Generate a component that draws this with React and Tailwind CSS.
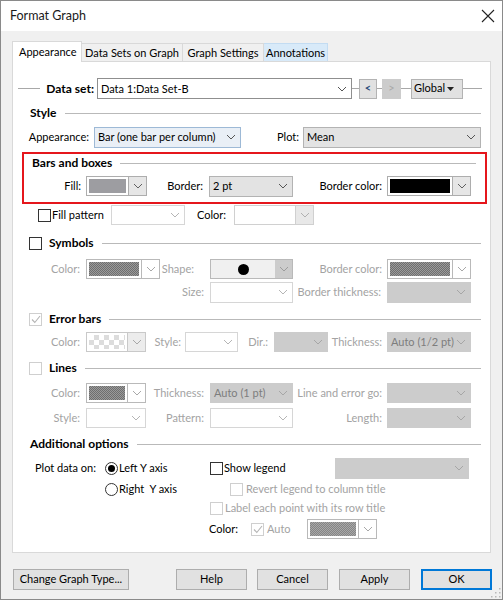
import React from "react";

const FONT = { fontFamily: 'Lato, "Liberation Sans", sans-serif' };

function Chevron({ color = "#606060" }) {
  return (
    <svg width="10" height="6" viewBox="0 0 10 6" className="shrink-0">
      <path d="M1 1 L5 5 L9 1" fill="none" stroke={color} strokeWidth="1" />
    </svg>
  );
}

// Plain dropdown: text on the left, chevron on the right
function Combo({ w, h = 20, text = "", variant = "white", className = "" }) {
  const styles = {
    white: "bg-white border-[#8f8f8f] text-black",
    blue: "bg-[#e9eff6] border-[#9db9d6] text-black",
    gray: "bg-[#e3e3e3] border-[#b3b3b3] text-black",
    off: "bg-white border-[#d6d6d6] text-[#9a9a9a]",
    offGray: "bg-[#cccccc] border-[#cccccc] text-[#7d7d7d]",
  };
  const chev = {
    white: "#555",
    blue: "#555",
    gray: "#555",
    off: "#b5b5b5",
    offGray: "#a6a6a6",
  };
  return (
    <div
      className={`flex items-center shrink-0 border pl-[3px] pr-[4px] ${styles[variant]} ${className}`}
      style={{ width: w, height: h }}
    >
      <span className="flex-1 min-w-0 whitespace-nowrap leading-[16px] text-[11px]">{text}</span>
      <Chevron color={chev[variant]} />
    </div>
  );
}

// Colour picker dropdown: a swatch and a separate arrow button
function Swatch({ w, h = 20, fill, btn = "bg-[#e6e6e6]", border = "border-[#adadad]", chev = "#606060" }) {
  return (
    <div className={`flex shrink-0 border ${border} bg-white`} style={{ width: w, height: h }}>
      <div className="flex-1 p-[2px]">
        <div className="w-full h-full" style={fill ? { background: fill } : undefined} />
      </div>
      <div className={`w-[18px] flex items-center justify-center border-l ${border} ${btn}`}>
        <Chevron color={chev} />
      </div>
    </div>
  );
}

function Lbl({ w, children, off = false, bold = false, align = "right", className = "" }) {
  return (
    <div
      className={`shrink-0 whitespace-pre ${align === "right" ? "text-right" : "text-left"} ${
        off ? "text-[#a3a3a3]" : "text-black"
      } ${bold ? "font-bold" : ""} ${className}`}
      style={{ width: w }}
    >
      {children}
    </div>
  );
}

function Check({ checked = false, off = false, className = "" }) {
  return (
    <div
      className={`w-[13px] h-[13px] shrink-0 border bg-white flex items-center justify-center ${
        off ? "border-[#cfcfcf]" : "border-[#333333]"
      } ${className}`}
    >
      {checked && (
        <svg width="10" height="9" viewBox="0 0 10 9">
          <path d="M1 4.5 L3.8 7.5 L9 1" fill="none" stroke={off ? "#b4b4b4" : "#222"} strokeWidth="1.1" />
        </svg>
      )}
    </div>
  );
}

function Radio({ on = false }) {
  return (
    <div className="w-[13px] h-[13px] shrink-0 rounded-full border border-[#333333] bg-white flex items-center justify-center">
      {on && <div className="w-[7px] h-[7px] rounded-full bg-black" />}
    </div>
  );
}

function Header({ children, check, checked, off, gap = 8 }) {
  return (
    <div className="flex items-center h-[16px] mr-[9px]">
      {check ? (
        <>
          <Check className="ml-[16px]" checked={checked} off={off} />
          <span className="ml-[7px] font-bold whitespace-nowrap text-[12px]">{children}</span>
        </>
      ) : (
        <span className="ml-[17px] font-bold whitespace-nowrap text-[12px]">{children}</span>
      )}
      <div className="flex-1 h-px bg-[#b9b9b9]" style={{ marginLeft: gap }} />
    </div>
  );
}

function Tab({ children, active = false, hover = false, w }) {
  if (active) {
    return (
      <div
        className="h-[21px] bg-white border border-b-0 border-[#d9d9d9] relative z-10 -mb-px pl-[6px] pt-[2px] shrink-0 whitespace-nowrap"
        style={{ width: w }}
      >
        {children}
      </div>
    );
  }
  return (
    <div
      className={`h-[18px] border border-b-0 border-l-0 shrink-0 text-center leading-[17px] whitespace-nowrap ${
        hover ? "bg-[#d8eaf9] border-[#c3dcf2]" : "bg-[#f0f0f0] border-[#d9d9d9]"
      }`}
      style={{ width: w }}
    >
      {children}
    </div>
  );
}

function Button({ children, w, primary = false }) {
  return (
    <div
      className={`h-[21px] flex items-center justify-center shrink-0 whitespace-nowrap bg-[#e1e1e1] ${
        primary ? "border-2 border-[#0078d7]" : "border border-[#adadad]"
      }`}
      style={{ width: w }}
    >
      {children}
    </div>
  );
}

export default function App() {
  const dots = "repeating-conic-gradient(#6e6e6e 0% 25%, #9a9a9a 0% 50%) 0 0 / 2px 2px";
  const dotsLight = "repeating-conic-gradient(#858585 0% 25%, #a8a8a8 0% 50%) 0 0 / 2px 2px";
  const checker = "repeating-conic-gradient(#dcdcdc 0% 25%, #ffffff 0% 50%) 0 0 / 10px 10px";

  return (
    <div
      className="w-[503px] h-[600px] border border-[#8a8a8a] bg-[#f0f0f0] flex flex-col text-[11px] text-black relative overflow-hidden"
      style={FONT}
    >
      {/* Title bar */}
      <div className="h-[30px] bg-white flex items-center justify-between shrink-0">
        <span className="ml-[9px] text-[12.5px] text-[#1a1a1a]">Format Graph</span>
        <svg width="14" height="14" viewBox="0 0 14 14" className="mr-[7px]">
          <path d="M1 1 L13 13 M13 1 L1 13" stroke="#222" strokeWidth="1.1" />
        </svg>
      </div>

      {/* Tabs */}
      <div className="flex items-end ml-[11px] mt-[10px] shrink-0">
        <Tab active w={70}>Appearance</Tab>
        <Tab w={101}>Data Sets on Graph</Tab>
        <Tab w={81}>Graph Settings</Tab>
        <Tab hover w={64}>Annotations</Tab>
      </div>

      {/* Page */}
      <div className="ml-[11px] w-[479px] h-[492px] bg-white border border-[#d9d9d9] flex flex-col shrink-0">
        {/* Data set row */}
        <div className="flex items-center h-[21px] mt-[16px]">
          <div className="ml-[5px] w-[22px] h-px bg-[#a8a8a8]" />
          <Lbl w={54} bold className="text-[12px]">Data set:</Lbl>
          <Combo w={255} h={21} text="Data 1:Data Set-B" variant="white" className="ml-[3px]" />
          <div className="w-[7px] h-px bg-[#a8a8a8]" />
          <div className="w-[18px] h-[20px] bg-[#e1e1e1] border border-[#b3b3b3] flex items-center justify-center text-[#2d4f7c] font-bold">
            &lt;
          </div>
          <div className="w-[5px] h-px bg-[#a8a8a8]" />
          <div className="w-[19px] h-[20px] bg-[#cccccc] flex items-center justify-center text-[#a8a8a8]">&gt;</div>
          <div className="w-[10px] h-px bg-[#a8a8a8]" />
          <div className="w-[52px] h-[20px] bg-[#e1e1e1] border border-[#b3b3b3] flex items-center pl-[2px]">
            <span className="flex-1">Global</span>
            <svg width="7" height="4" viewBox="0 0 7 4" className="mr-[8px]">
              <path d="M0 0 L7 0 L3.5 4 Z" fill="#222" />
            </svg>
          </div>
          <div className="w-[19px] h-px bg-[#a8a8a8]" />
        </div>

        {/* Style */}
        <div className="mt-[6px]">
          <Header>Style</Header>
        </div>
        <div className="flex items-center h-[22px] mt-[5px]">
          <Lbl w={76}>Appearance:</Lbl>
          <Combo w={147} h={21} text="Bar (one bar per column)" variant="blue" className="ml-[5px]" />
          <Lbl w={58}>Plot:</Lbl>
          <Combo w={178} h={21} text="Mean" variant="gray" className="ml-[4px]" />
        </div>

        {/* Bars and boxes */}
        <div className="ml-[9px] w-[465px] h-[52px] mt-[4px] border-2 border-[#e5161c] flex flex-col">
          <div className="mt-[1px] -ml-[9px]">
            <Header>Bars and boxes</Header>
          </div>
          <div className="flex items-center h-[22px] mt-[4px]">
            <Lbl w={57}>Fill:</Lbl>
            <div className="ml-[5px]">
              <Swatch w={61} fill="#9d9da1" />
            </div>
            <Lbl w={56}>Border:</Lbl>
            <Combo w={84} h={21} text="2 pt" variant="gray" className="ml-[6px]" />
            <Lbl w={89}>Border color:</Lbl>
            <div className="ml-[5px]">
              <Swatch w={84} fill="#000000" />
            </div>
          </div>
        </div>

        {/* Fill pattern */}
        <div className="flex items-center h-[22px]">
          <Check className="ml-[25px]" />
          <Lbl w={59} align="left" className="ml-[1px]">Fill pattern</Lbl>
          <Combo w={74} h={20} variant="off" />
          <Lbl w={41}>Color:</Lbl>
          <div className="ml-[8px]">
            <Swatch w={80} fill="#ffffff" border="border-[#d0d0d0]" btn="bg-[#e8e8e8]" chev="#b0b0b0" />
          </div>
        </div>

        {/* Symbols */}
        <div className="mt-[9px]">
          <Header check gap={8}>Symbols</Header>
        </div>
        <div className="flex items-center h-[22px] mt-[7px]">
          <Lbl w={67} off>Color:</Lbl>
          <div className="ml-[6px]">
            <Swatch w={74} fill={dots} border="border-[#b9b9b9]" btn="bg-white" chev="#a8a8a8" />
          </div>
          <Lbl w={34} off>Shape:</Lbl>
          <div className="ml-[16px] w-[83px] h-[20px] flex border border-[#b9b9b9] bg-[#f0f0f0]">
            <div className="flex-1 flex items-center justify-center">
              <div className="w-[11px] h-[11px] rounded-full bg-black" />
            </div>
            <div className="w-[17px] bg-[#cccccc] flex items-center justify-center">
              <Chevron color="#9c9c9c" />
            </div>
          </div>
          <Lbl w={89} off>Border color:</Lbl>
          <div className="ml-[5px]">
            <Swatch w={84} fill={dots} border="border-[#b9b9b9]" btn="bg-white" chev="#a8a8a8" />
          </div>
        </div>
        <div className="flex items-center h-[22px] mt-[1px]">
          <Lbl w={191} off>Size:</Lbl>
          <Combo w={83} h={21} variant="off" className="ml-[6px]" />
          <Lbl w={88} off>Border thickness:</Lbl>
          <Combo w={84} h={21} variant="offGray" className="ml-[6px]" />
        </div>

        {/* Error bars */}
        <div className="mt-[8px]">
          <Header check checked off>Error bars</Header>
        </div>
        <div className="flex items-center h-[22px] mt-[4px]">
          <Lbl w={67} off>Color:</Lbl>
          <div className="ml-[6px]">
            <Swatch w={60} fill={checker} border="border-[#c9c9c9]" btn="bg-[#ececec]" chev="#a8a8a8" />
          </div>
          <Lbl w={35} off>Style:</Lbl>
          <Combo w={53} h={20} variant="off" className="ml-[4px]" />
          <Lbl w={30} off>Dir.:</Lbl>
          <Combo w={54} h={20} variant="offGray" className="ml-[6px]" />
          <Lbl w={54} off>Thickness:</Lbl>
          <Combo w={84} h={20} text="Auto (1/2 pt)" variant="offGray" className="ml-[5px]" />
        </div>

        {/* Lines */}
        <div className="mt-[7px]">
          <Header check off>Lines</Header>
        </div>
        <div className="flex items-center h-[22px] mt-[6px]">
          <Lbl w={67} off>Color:</Lbl>
          <div className="ml-[6px]">
            <Swatch w={60} fill={dots} border="border-[#b9b9b9]" btn="bg-white" chev="#a8a8a8" />
          </div>
          <Lbl w={58} off>Thickness:</Lbl>
          <Combo w={83} h={20} text="Auto (1 pt)" variant="offGray" className="ml-[6px]" />
          <Lbl w={89} off>Line and error go:</Lbl>
          <Combo w={84} h={20} variant="offGray" className="ml-[5px]" />
        </div>
        <div className="flex items-center h-[22px] mt-[3px]">
          <Lbl w={67} off>Style:</Lbl>
          <Combo w={60} h={20} variant="off" className="ml-[6px]" />
          <Lbl w={58} off>Pattern:</Lbl>
          <Combo w={83} h={20} variant="off" className="ml-[6px]" />
          <Lbl w={89} off>Length:</Lbl>
          <Combo w={84} h={20} variant="offGray" className="ml-[5px]" />
        </div>

        {/* Additional options */}
        <div className="mt-[7px]">
          <Header>Additional options</Header>
        </div>
        <div className="flex items-center h-[22px] mt-[5px]">
          <Lbl w={70} align="left" className="ml-[22px]">Plot data on:</Lbl>
          <Radio on />
          <Lbl w={91} align="left" className="ml-[1px]">Left Y axis</Lbl>
          <Check />
          <Lbl w={111} align="left" className="ml-[1px]">Show legend</Lbl>
          <Combo w={134} h={21} variant="offGray" />
        </div>
        <div className="flex items-center h-[18px] mt-[1px]">
          <div className="ml-[92px]">
            <Radio />
          </div>
          <Lbl w={111} align="left" className="ml-[1px]">Right  Y axis</Lbl>
          <Check off />
          <Lbl w={160} align="left" off className="ml-[3px]">Revert legend to column title</Lbl>
        </div>
        <div className="flex items-center h-[18px] mt-[1px]">
          <Check off className="ml-[197px]" />
          <Lbl w={170} align="left" off className="ml-[2px]">Label each point with its row title</Lbl>
        </div>
        <div className="flex items-center h-[22px] mt-[1px]">
          <Lbl w={42} align="left" className="ml-[196px]">Color:</Lbl>
          <Check checked off />
          <Lbl w={40} align="left" off className="ml-[3px]">Auto</Lbl>
          <Swatch w={70} fill={dotsLight} border="border-[#b9b9b9]" btn="bg-white" chev="#a8a8a8" />
        </div>
      </div>

      {/* Dialog buttons */}
      <div className="flex items-center mt-[16px] ml-[12px] shrink-0">
        <Button w={116}>Change Graph Type...</Button>
        <div className="ml-[47px]">
          <Button w={71}>Help</Button>
        </div>
        <div className="ml-[10px]">
          <Button w={71}>Cancel</Button>
        </div>
        <div className="ml-[11px]">
          <Button w={71}>Apply</Button>
        </div>
        <div className="ml-[11px]">
          <Button w={71} primary>OK</Button>
        </div>
      </div>

      {/* Size grip */}
      <svg width="11" height="11" viewBox="0 0 11 11" className="absolute right-[1px] bottom-[1px]">
        {[
          [9, 1],
          [9, 5],
          [5, 5],
          [9, 9],
          [5, 9],
          [1, 9],
        ].map(([x, y]) => (
          <rect key={`${x}-${y}`} x={x} y={y} width="1.5" height="1.5" fill="#b8b8b8" />
        ))}
      </svg>
    </div>
  );
}
